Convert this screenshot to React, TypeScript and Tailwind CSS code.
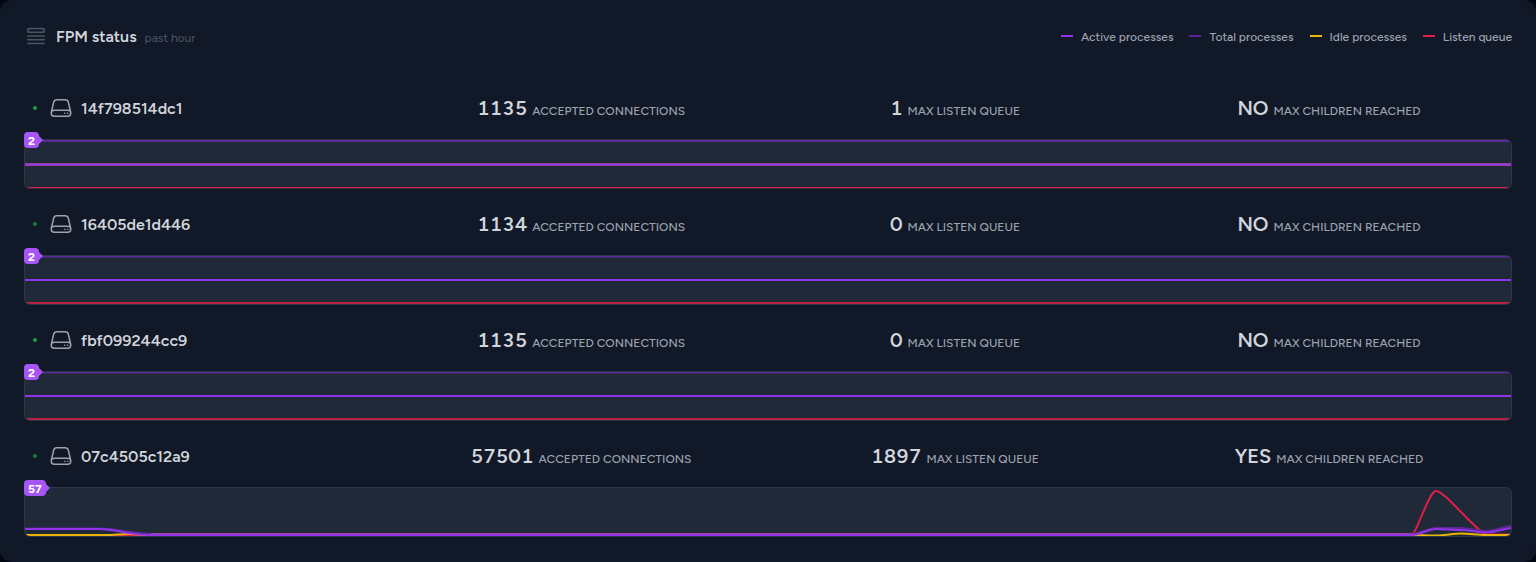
import React from "react";

type Stroke = { d: string; color: string; width: number; opacity?: number };
type Server = {
  name: string;
  accepted: string;
  queue: string;
  reached: string;
  peak: string;
  dot: string;
  strokes: Stroke[];
};

const ACTIVE = "#9333ea";
const TOTAL = "#5b2a97";
const IDLE = "#eab308";
const LISTEN = "#e11d48";

const flat = (y: number) => `M0 ${y}H1486`;

const quiet: Stroke[] = [
  { d: flat(47), color: LISTEN, width: 2, opacity: 0.8 },
  { d: flat(0.5), color: TOTAL, width: 2 },
  { d: flat(24), color: ACTIVE, width: 2 },
];

const servers: Server[] = [
  {
    name: "14f798514dc1",
    accepted: "1135",
    queue: "1",
    reached: "NO",
    peak: "2",
    dot: "bg-[#16a34a]",
    strokes: [
      { d: flat(47.5), color: LISTEN, width: 1 },
      { d: flat(1), color: TOTAL, width: 2 },
      { d: flat(24.5), color: "#9440a4", width: 3 },
      { d: flat(24.5), color: ACTIVE, width: 1 },
    ],
  },
  { name: "16405de1d446", accepted: "1134", queue: "0", reached: "NO", peak: "2", dot: "bg-[#15803d]", strokes: quiet },
  { name: "fbf099244cc9", accepted: "1135", queue: "0", reached: "NO", peak: "2", dot: "bg-[#16a34a]", strokes: quiet },
  {
    name: "07c4505c12a9",
    accepted: "57501",
    queue: "1897",
    reached: "YES",
    peak: "57",
    dot: "bg-[#15803d]",
    strokes: [
      { d: "M0 47H1387C1393 42 1404 3 1411 3C1417 3 1429 17 1436 24C1443 31 1454 43 1461 46.500H1486", color: LISTEN, width: 2 },
      { d: "M0 47H80C90 47 95 46 105 46C112 46 118 47 126 47H1387C1395 47 1402 47.500 1411 47.500C1420 47.500 1428 45.500 1436 45.500C1445 45.500 1452 47 1461 47H1486", color: IDLE, width: 2 },
      { d: "M0 40.500H74C90 40.500 108 45.500 130 46H1387C1395 46 1403 40 1411 40H1436C1445 40 1452 43 1461 43C1470 43 1478 39 1486 38", color: TOTAL, width: 2 },
      { d: "M126 45.500H1387", color: "#a0468f", width: 1 },
      { d: "M0 41H74C90 41 104 47 122 47H1387C1395 47 1403 41 1411 41C1420 41 1428 42 1436 42C1445 42 1452 44.500 1461 44.500C1470 44.500 1478 41 1486 40", color: ACTIVE, width: 2 },
    ],
  },
];

const legend = [
  { label: "Active processes", swatch: "bg-[#9333ea]" },
  { label: "Total processes", swatch: "bg-[#5b2295]" },
  { label: "Idle processes", swatch: "bg-[#eab308]" },
  { label: "Listen queue", swatch: "bg-[#e11d48]" },
];

function Icon({ d, className }: { d: string; className: string }) {
  return (
    <svg viewBox="0 0 24 24" fill="none" stroke="currentColor" strokeWidth={1.5} strokeLinecap="round" strokeLinejoin="round" className={className} aria-hidden="true">
      <path d={d} />
    </svg>
  );
}

const QUEUE_LIST =
  "M3.75 12h16.5m-16.5 3.75h16.5M3.75 19.5h16.5M5.625 4.5h12.75a1.875 1.875 0 0 1 0 3.75H5.625a1.875 1.875 0 0 1 0-3.75Z";
const SERVER =
  "M21.75 17.25v-.228a4.5 4.5 0 0 0-.12-1.03l-2.268-9.64a3.375 3.375 0 0 0-3.285-2.602H7.923a3.375 3.375 0 0 0-3.285 2.602l-2.268 9.64a4.5 4.5 0 0 0-.12 1.03v.228m19.5 0a3 3 0 0 1-3 3H5.25a3 3 0 0 1-3-3m19.5 0a3 3 0 0 0-3-3H5.25a3 3 0 0 0-3 3m16.5 0h.008v.008h-.008v-.008Zm-3 0h.008v.008h-.008v-.008Z";

function Stat({ value, label }: { value: string; label: string }) {
  return (
    <div className="flex items-baseline justify-center gap-[5px] whitespace-nowrap">
      <span className="text-xl leading-6 font-semibold tabular-nums text-[#d1d5db]">{value}</span>
      <span className="text-xs leading-4 font-medium text-[#9ca3af] uppercase">{label}</span>
    </div>
  );
}

function ServerRow({ server }: { server: Server }) {
  return (
    <article>
      <div className="grid h-6 grid-cols-4 gap-2">
        <div className="flex h-6 items-center pl-2">
          <span className="flex w-[17px] shrink-0 pl-px">
            <span className={`size-1 rounded-full ${server.dot}`} />
          </span>
          <Icon d={SERVER} className="size-6 shrink-0 text-[#9ca3af]" />
          <h3 className="ml-2 pt-0.5 text-base leading-6 font-semibold text-[#d1d5db]">{server.name}</h3>
        </div>
        <Stat value={server.accepted} label="Accepted connections" />
        <Stat value={server.queue} label="Max listen queue" />
        <Stat value={server.reached} label="Max children reached" />
      </div>
      <div className="relative mt-[19px] h-[50px] rounded-md border border-[#374151]/50 bg-[#1f2937]">
        <div className="h-full overflow-hidden rounded-[5px]">
          <svg viewBox="0 0 1486 48" preserveAspectRatio="none" className="block h-full w-full" role="img" aria-label={`${server.name} processes`}>
            {server.strokes.map((s, i) => (
              <path key={i} d={s.d} fill="none" stroke={s.color} strokeWidth={s.width} opacity={s.opacity} vectorEffect="non-scaling-stroke" />
            ))}
          </svg>
        </div>
        <div className="absolute -top-2 -left-px flex h-4 items-center">
          <span className="h-4 rounded-sm bg-[#a855f7] px-1 text-xs leading-[18px] font-bold text-white">{server.peak}</span>
          <svg viewBox="0 0 5 10" className="-ml-px h-2.5 w-[5px] text-[#a855f7]" aria-hidden="true">
            <path d="M0 0L5 5L0 10Z" fill="currentColor" />
          </svg>
        </div>
      </div>
    </article>
  );
}

export default function App() {
  return (
    <div className="min-h-screen bg-[#030712] font-['Figtree','Inter',sans-serif] antialiased">
      <section className="rounded-xl bg-[#111827] px-6 pt-6 pb-[25px]">
        <header className="flex h-6 items-center justify-between">
          <div className="flex items-center">
            <Icon d={QUEUE_LIST} className="size-6 text-[#4b5563]" />
            <div className="ml-2 flex items-baseline gap-2 pt-0.5">
              <h2 className="text-base leading-6 font-semibold text-[#d1d5db]">FPM status</h2>
              <small className="text-xs text-[#4b5563]">past hour</small>
            </div>
          </div>
          <ul className="flex gap-4 text-xs font-medium text-[#9ca3af]">
            {legend.map((l) => (
              <li key={l.label} className="flex items-center gap-2">
                <span className={`h-0.5 w-3 ${l.swatch}`} />
                <span className="pt-0.5">{l.label}</span>
              </li>
            ))}
          </ul>
        </header>
        <div className="mt-12 flex flex-col gap-[23px]">
          {servers.map((s) => (
            <ServerRow key={s.name} server={s} />
          ))}
        </div>
      </section>
    </div>
  );
}
